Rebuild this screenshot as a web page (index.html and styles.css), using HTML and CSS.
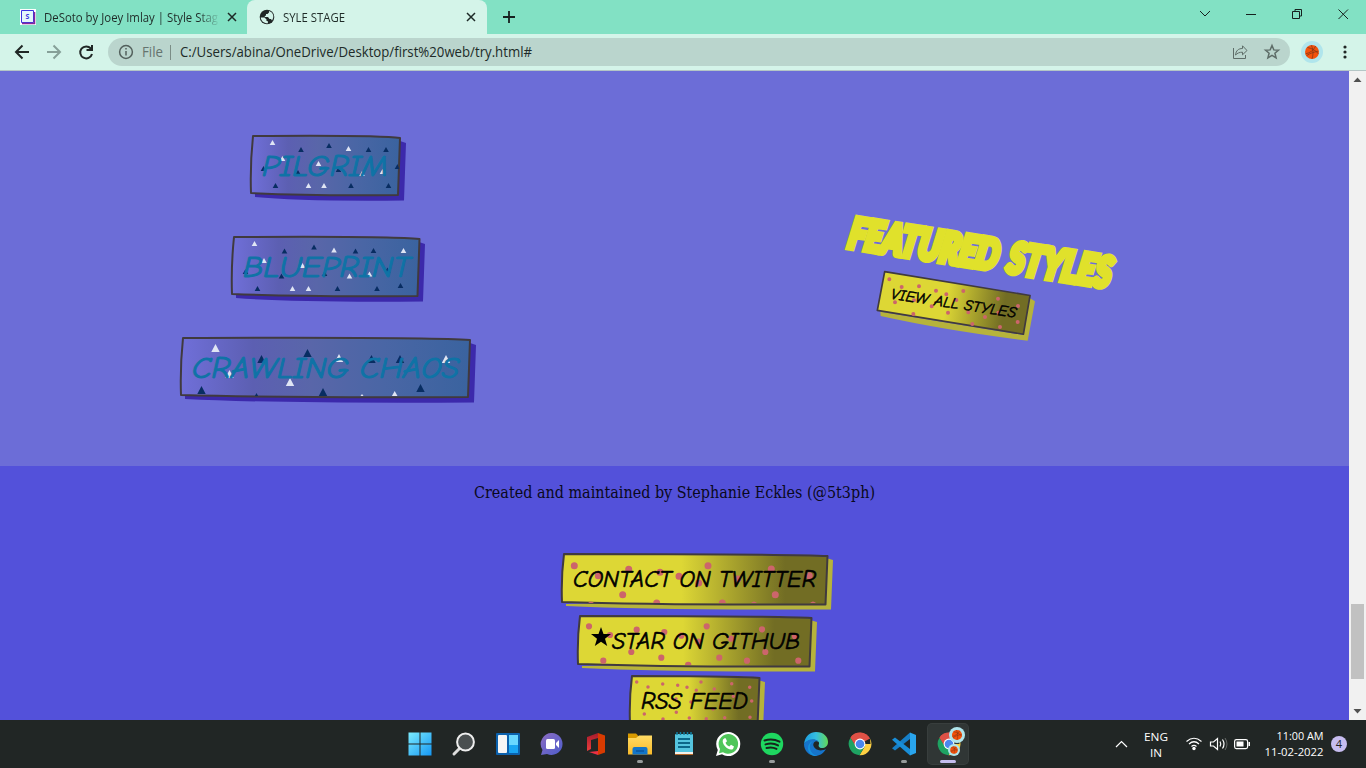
FILE: index.html
```html
<!DOCTYPE html>
<html lang="en">
<head>
<meta charset="utf-8">
<title>SYLE STAGE</title>
<link rel="stylesheet" href="styles.css">
</head>
<body>
<svg class="defs" width="0" height="0">
  <defs>
    <linearGradient id="gold"><stop offset="0" stop-color="#ddd735"/><stop offset=".45" stop-color="#ddd735"/><stop offset=".84" stop-color="#726d24"/><stop offset="1" stop-color="#726d24"/></linearGradient>
    <linearGradient id="blue"><stop offset="0" stop-color="#706fd9"/><stop offset=".25" stop-color="#5c5fb2"/><stop offset=".45" stop-color="#5966a9"/><stop offset=".7" stop-color="#4a66a5"/><stop offset="1" stop-color="#3a639f"/></linearGradient>
    <linearGradient id="bubble" x2="1" y2="1"><stop stop-color="#8d6cc2"/><stop offset="1" stop-color="#4c5dcc"/></linearGradient>
    <linearGradient id="win" x2="1" y2="1"><stop stop-color="#7cecff"/><stop offset="1" stop-color="#1597f4"/></linearGradient>
    <linearGradient id="edge" x2="1"><stop stop-color="#1b9de2"/><stop offset=".5" stop-color="#35bde0"/><stop offset="1" stop-color="#62d957"/></linearGradient>
    <linearGradient id="folder" x2="0" y2="1"><stop stop-color="#ffdb65"/><stop offset="1" stop-color="#f9bb2a"/></linearGradient>
    <linearGradient id="office" x2="0" y2="1"><stop stop-color="#a51b2c"/><stop offset="1" stop-color="#ed3d3d"/></linearGradient>
    <symbol id="ball" viewBox="0 0 24 24"><circle cx="12" cy="12" r="12" fill="#b0e5ec"/><circle cx="12" cy="12" r="7.600" fill="#f4510b"/><path d="M5 14c5-1 9-4 11-8.500M11 4.500c2 3 3 9 1 15M7 7c5 1 10 4 12 7M6 16c4-3 9-4 13-5" fill="none" stroke="#7b3518" stroke-width=".8"/></symbol>
    <symbol id="chrome" viewBox="0 0 24 24"><path d="M12 12 2.500 5.500A11.300 11.300 0 0 1 22 6.500Z" fill="#df5146"/><path d="M12 12H22.500L22 6.500A11.300 11.300 0 0 1 11.500 23.200L17 14Z" fill="#fdd043"/><path d="M2.500 5.800A11.300 11.300 0 0 0 11.500 23.200L17 14H8Z" fill="#1ea362"/><path d="M12 6.500H22Q18 .7 12 .7 5.600.7 2.500 5.700L7 13Z" fill="#df5146"/><circle cx="12" cy="12" r="5.400" fill="#fff"/><circle cx="12" cy="12" r="4.300" fill="#4b87ee"/></symbol>
  </defs>
</svg>

<header class="tabs">
  <div class="tab">
    <svg class="fav" width="16" height="16"><path fill="#fff" d="M0 0h16v16H0z"/><path d="M1.500 1.500h12v12h-12z" fill="#e4f7fb" stroke="#3c33e0"/><path d="M14.500 3v11.500H2" fill="none" stroke="#85299b" stroke-width="1.500"/><text x="5.500" y="10" class="fav-letter">S</text></svg>
    <svg class="tab-name" width="176" height="20"><text x="0" y="12.500" textLength="174" lengthAdjust="spacingAndGlyphs">DeSoto by Joey Imlay | Style Stag</text></svg>
    <svg class="close" width="10" height="10"><path d="m1 1 8 8m0-8-8 8"/></svg>
  </div>
  <div class="tab active">
    <svg class="fav" width="16" height="16" viewBox="0 0 16 16"><circle cx="8" cy="8" r="7.300" fill="#202625"/><path d="M1.800 8.500h3.700l2 2v1.500h1.200l.3 2.300C5 14.500 2 12 1.800 8.500ZM10 2.100V3.500L8.500 5H7v1.500L5.800 7v1H9l1.500 2H12l1 1.500C15.500 8 14.500 3.500 10 2.100Z" fill="#d4f4e9"/></svg>
    <svg class="tab-name" width="176" height="20"><text x="0" y="12.500" textLength="62" lengthAdjust="spacingAndGlyphs">SYLE STAGE</text></svg>
    <svg class="close" width="10" height="10"><path d="m1 1 8 8m0-8-8 8"/></svg>
  </div>
  <svg class="plus" width="14" height="14"><path d="M7 1v12M1 7h12"/></svg>
  <svg class="winctl" width="170" height="24"><path d="m20 7 5 5 5-5M66 10.500h10M112.500 7.500h7v7h-7zM115 7.500v-2h6.500v6.500h-2M158.500 5.500l9.500 9.500m0-9.500-9.500 9.500"/></svg>
</header>

<nav class="toolbar">
  <svg class="nav" width="108" height="36"><path d="M29 18H16m6.500-6.500L16 18l6.500 6.500"/><path class="faint" d="M47 18h13m-6.500-6.500L60 18l-6.500 6.500"/><path d="M90.800 14.500A6 6 0 1 0 92 20M92 11v5h-5.500"/></svg>
  <div class="omnibox">
    <svg class="info" width="16" height="16"><circle cx="8" cy="8" r="6.400"/><path d="M8 7v4.500M8 4v1.600"/></svg>
    <svg class="url" width="410" height="26"><text class="file" x="8" y="18" textLength="21" lengthAdjust="spacingAndGlyphs">File</text><path d="M36.500 6v15" stroke="#7b8d86"/><text x="46" y="18" textLength="352" lengthAdjust="spacingAndGlyphs">C:/Users/abina/OneDrive/Desktop/first%20web/try.html#</text></svg>
    <svg class="acts" width="50" height="20"><path d="M2.500 6v10.500h12V13M4.500 13c.5-4.500 3-6.500 7-6.500V3.800l4.500 4.700-4.500 4.300v-2.600c-3 0-5 .8-7 2.800Z"/><path stroke-width="1.500" d="m41 3.500 1.800 4.400 4.700.3-3.600 3 1.200 4.700-4.100-2.500-4.100 2.500 1.200-4.700-3.600-3 4.700-.3Z"/></svg>
  </div>
  <svg class="avatar" width="22" height="22"><use href="#ball"/></svg>
  <svg class="more" width="4" height="16"><path d="M2 3h0M2 8h0M2 13h0"/></svg>
</nav>

<div class="viewport">
  <main class="page">
    <section class="styles">
      <div class="cards">
        <svg class="btn blue" width="156" height="66">
          <path class="shade" d="M5 59 148 55 150 6 156 8 154 65.500Q50 66.500 5 62Z"/>
          <path class="face" d="M3 1Q130 0 150 3L148 60Q65 61 1 58Q0 30 3 1Z"/>
          <path class="white" d="M22.500 5l2.800 5h-5.600zM98.500 11l2.800 5h-5.600zM32.500 21l2.800 5h-5.600zM68.500 26l2.800 5h-5.600zM132.500 34l2.800 5h-5.600zM58.500 48l2.800 5h-5.600zM74 48l2.800 5h-5.600zM112 36l2.800 5h-5.600z"/>
          <path class="navy" d="M51 12l2.800 5h-5.600zM79 8l2.800 5h-5.600zM118.500 12l2.800 5h-5.600zM136 12l2.800 5h-5.600zM13.500 31l2.800 5h-5.600zM48 35l2.800 5h-5.600zM88.500 32l2.800 5h-5.600zM147.500 29l1.800 5h-4.600zM25.500 48l2.800 5h-5.600zM101 48l2.800 5h-5.600zM138.500 48l2.800 5h-5.600z"/>
          <text x="12" y="41" textLength="126" lengthAdjust="spacingAndGlyphs">PILGRIM</text>
        </svg>
        <svg class="btn blue" width="194" height="66">
          <path class="shade" d="M5 59 186 55 188 6 194 8 192 65.500Q60 66.500 5 62Z"/>
          <path class="face" d="M3 1Q160 0 188.500 3L186.500 60Q75 61 1 58Q0 30 3 1Z"/>
          <path class="white" d="M23.500 5l2.800 5h-5.600zM103 11.500l2.800 5h-5.600zM172.500 12l2.800 5h-5.600zM33 22l2.800 5h-5.600zM71.500 27l2.800 5h-5.600zM138.500 35.500l2.800 5h-5.600zM118.500 37.500l2.800 5h-5.600zM61.500 50l2.800 5h-5.600zM77.500 50l2.800 5h-5.600z"/>
          <path class="navy" d="M53.500 12.500l2.800 5h-5.600zM83 8.500l2.800 5h-5.600zM124.500 12.500l2.800 5h-5.600zM142.500 12l2.800 5h-5.600zM14.500 33l2.800 5h-5.600zM50.500 37.500l2.800 5h-5.600zM93.500 35l2.800 5h-5.600zM156.500 31.500l2.800 5h-5.600zM26.500 50l2.800 5h-5.600zM106.500 50l2.800 5h-5.600zM146 50l2.800 5h-5.600zM169.500 47l2.800 5h-5.600z"/>
          <text x="12" y="41" textLength="167" lengthAdjust="spacingAndGlyphs">BLUEPRINT</text>
        </svg>
        <svg class="btn blue" width="296" height="66">
          <path class="shade" d="M5 59 288 55 290 6 296 8 294 65.500Q90 66.500 5 62Z"/>
          <path class="face" d="M3 1Q250 0 290 3L288 60Q110 61 1 58Q0 30 3 1Z"/>
          <path class="white" d="M35.500 7l4.200 8h-8.400zM159 17l4.200 8h-8.400zM49.500 33l4.200 8h-8.400zM110 41l4.200 8h-8.400zM266 18l4.200 8h-8.400zM214.700 54l2.800 5h-5.600zM182 57l1.500 2h-3z"/>
          <path class="navy" d="M81.500 18l4.200 8h-8.400zM127.500 12l4.200 8h-8.400zM191.500 18l4.200 8h-8.400zM220 18l4.200 8h-8.400zM21.500 49l4.200 8h-8.400zM143 51l4.200 8h-8.400zM76.500 56l1.600 3h-3.200zM240.500 47l4.200 8h-8.400z"/>
          <text x="12" y="41" textLength="267" lengthAdjust="spacingAndGlyphs">CRAWLING CHAOS</text>
        </svg>
      </div>
      <svg class="featured" width="295" height="145" viewBox="0 0 885 435">
        <g class="headline" transform="translate(31 126) rotate(8.800) skewX(-3)">
          <text x="4" y="0" textLength="453" lengthAdjust="spacingAndGlyphs">FEATURED</text>
          <text x="487" y="0" textLength="313" lengthAdjust="spacingAndGlyphs">STYLES</text>
        </g>
        <path d="M136 320 565 390 585 280 600 289 578 407Q330 376 137 333Z" fill="#b6b33b"/>
        <g transform="translate(149 200) rotate(9.300)"><path d="M0 0 442 0 441 118 -3 118Z" fill="url(#gold)" stroke="#403a3e" stroke-width="5" stroke-linejoin="round"/></g>
        <path class="dots" stroke-width="12" d="M163 223h0M200 246h0M252 244h0M303 257h0M334 268h0M385 258h0M489 281h0M549 303h0M180 292h0M237 286h0M290 304h0M364 285h0M339 323h0M400 322h0M450 336h0M490 323h0M548 351h0M235 327h0M412 357h0M495 366h0"/>
        <text class="view" transform="translate(166 281) rotate(8.700)" x="0" y="0" textLength="380" lengthAdjust="spacingAndGlyphs">VIEW ALL STYLES</text>
      </svg>
    </section>
    <footer class="foot">
      <svg class="credit" width="404" height="24"><text x="1" y="17" textLength="401" lengthAdjust="spacingAndGlyphs">Created and maintained by Stephanie Eckles (@5t3ph)</text></svg>
      <div class="links">
        <svg class="btn gold" width="272" height="57">
          <path class="shade" d="M5 51 263 47 265 5 272 7 270 56.500Q90 57 5 53Z"/>
          <path class="face" d="M3 1Q230 1 266.500 3L264.500 51.500Q90 52 1 49Q0 24 3 1Z"/>
          <path class="dots" stroke-width="7" d="M13.300 12.700h0M67.700 16.300h0M37.300 22.700h0M99 19.300h0M118 23.300h0M137.700 30h0M147 12.700h0M176.700 26h0M210.300 16h0M248.300 22.700h0M61.700 41.700h0M214.300 41.700h0"/>
          <path class="spots" d="M92.200 50a3.500 3.500 0 1 1 7 0zM157.800 50a3.500 3.500 0 1 1 7 0zM27 50q3-3 6 0zM190 50q3-3 6 0zM249 50q3-3 6 0z"/>
          <text x="12" y="34" textLength="243" lengthAdjust="spacingAndGlyphs">CONTACT ON TWITTER</text>
        </svg>
        <svg class="btn gold" width="240" height="57">
          <path class="shade" d="M5 51 232 47 233 5 240 7 238 56.500Q90 57 5 53Z"/>
          <path class="face" d="M3 1Q200 1 234.500 3L232.500 51.500Q90 52 1 49Q0 24 3 1Z"/>
          <path class="dots" stroke-width="6.200" d="M12 11.300h0M33 20h0M59.700 14.700h0M87.300 17h0M104.300 20.700h0M121.300 26.700h0M129.700 11.300h0M154 23.700h0M185 14.300h0M218 21.300h0M54.300 37h0M26.300 45.700h0M84.300 42.700h0M142.300 42.700h0M170 45.700h0M188.300 37h0M221.300 45.700h0"/>
          <path class="spots" d="M108 50a3.200 3.200 0 1 1 6.400 0z"/>
          <path d="m24 12 2.500 7 7.500.1-6 4.700 2.200 7.200-6.200-4.300-6.200 4.300 2.200-7.200-6-4.700 7.500-.1Z"/>
          <text x="35" y="34" textLength="188" lengthAdjust="spacingAndGlyphs">STAR ON GITHUB</text>
        </svg>
        <svg class="btn gold rss" width="136" height="57">
          <path class="shade" d="M5 51 128 47 129 5 136 7 134 56Q60 58 5 54Z"/>
          <path class="face" d="M3 1Q110 1 130.500 3L128.500 51Q60 52 1 49Q0 24 3 1Z"/>
          <path class="dots" stroke-width="3.500" d="M7.700 7h0M19 12h0M33.700 9h0M48.700 10.300h0M58 12.300h0M67.300 15.300h0M72 7h0M85.300 14h0M102.700 8.700h0M120.700 12.300h0M104.300 21.300h0M122.700 26h0M15.300 39h0M47.300 37.300h0M60.300 43h0M77.300 43.700h0M95.700 42.700h0M121 42.300h0M47 24h0M62 27h0M84 34h0M34 44h0"/>
          <text x="12" y="34" textLength="107" lengthAdjust="spacingAndGlyphs">RSS FEED</text>
        </svg>
      </div>
    </footer>
  </main>
  <aside class="scroll">
    <svg width="17" height="17"><path d="m4.500 11 4-4.500 4 4.500z" fill="#505050"/></svg>
    <div class="thumb"></div>
    <svg width="17" height="17"><path d="m4.500 6 4 4.500 4-4.500z" fill="#505050"/></svg>
  </aside>
</div>

<div class="taskbar">
  <div class="apps">
    <div class="app"><svg width="24" height="24"><path fill="url(#win)" d="M.5.500h11v11H.5zM12.500.500h11v11h-11zM.5 12.500h11v11H.5zM12.500 12.500h11v11h-11z"/></svg></div>
    <div class="app"><svg width="24" height="24"><path d="M8 16 2 22" stroke="#ddd" stroke-width="3" stroke-linecap="round"/><circle cx="13.500" cy="10" r="8.400" fill="#4a4f50" stroke="#eee" stroke-width="2"/></svg></div>
    <div class="app"><svg width="24" height="24"><rect y="1" width="24" height="22" rx="1" fill="#0b61ad"/><rect x="2" y="3" width="9" height="18" rx="1" fill="#f5f5f5"/><path fill="#69d7ff" d="M13 3h9v10h-9z"/><path fill="#19a5f2" d="M13 13h9v8h-9z"/></svg></div>
    <div class="app"><svg width="24" height="24"><path fill="url(#bubble)" d="M12 1a11 11 0 1 1-5 21L1 23l1.500-5A11 11 0 0 1 12 1Z"/><rect x="6" y="7" width="9" height="10" rx="1.500" fill="#fff"/><path d="m16 11 3-3v8l-3-3Z" fill="#fff"/></svg></div>
    <div class="app"><svg width="24" height="24"><path fill="url(#office)" d="M14 1 3 5v14l4-2V8l7-2z"/><path fill="#d83b01" d="M14 1l7 2.500v17L14 23z"/><path fill="#ed3044" d="M5 20l9-1v4z"/></svg></div>
    <div class="app run"><svg width="24" height="24"><path d="M0 1.500h8l2 2v5H0Z" fill="#d99a00"/><path d="M0 6h8l3-2.500h13v19H0Z" fill="url(#folder)"/><path d="M4.500 22.500V17q0-2 2-2h11q2 0 2 2v5.500Z" fill="#1275c8"/><path d="M8 19h8" stroke="#0b559d" stroke-width="1.500"/></svg></div>
    <div class="app"><svg width="24" height="24"><rect x="3" y="2" width="18" height="20" rx="1" fill="#55c5df"/><path d="M5 0v3m3.500-3v3M12 0v3M15.500 0v3M19 0v3" stroke="#117da0" stroke-width="1.500"/><path d="M6 7h12M6 11h12M6 15h12" stroke="#0c6789" stroke-width="2"/><path d="M3 20h18v3H3z" fill="#f4f0e8"/><path d="M3 22.500h18" stroke="#b46627"/></svg></div>
    <div class="app"><svg width="24" height="24"><path d="M12 0a12 12 0 1 1-6 22.200L0 24l1.800-6A12 12 0 0 1 12 0Z" fill="#fff"/><path d="M12 2a9.900 9.900 0 1 1-5 18.300L3 21.300 4 17A9.900 9.900 0 0 1 12 2Z" fill="#4fc65a"/><path d="M8.500 6.200 7 7.500c-2 5 6 12 10 9.500l1-2.500-3-1.700-1.700 1.700c-2-.8-3-2-3.800-3.700L11 9.200 9.700 6.200Z" fill="#fff"/></svg></div>
    <div class="app run"><svg width="24" height="24"><circle cx="12" cy="12" r="11.200" fill="#1ed760"/><path d="M4.500 8.500q8-2.500 15 1.200M5.500 12.400q7-2 12.500 1M6.500 16q5.500-1.500 10 .9" fill="none" stroke="#17251d" stroke-width="2" stroke-linecap="round"/></svg></div>
    <div class="app"><svg width="24" height="24"><path d="M0 12C1 4 6 0 12 0c8 0 12 5 12 10 0 4-3 6-6 6s-4-2-3-4c1-4-8-7-15 0Z" fill="url(#edge)"/><path d="M0 12C3 6 13 6 14.500 10c-3-2-6 1-5 4 1.500 4 7 6 12.500 3-3 5-7 7-11 7C4 23.500 0 18 0 12Z" fill="#1674cb"/><path d="M9 9c-6 4-3 13 4 15-5 .4-9-3-9-8 0-3 2-6 5-7Z" fill="#1590dc"/></svg></div>
    <div class="app"><svg width="24" height="24"><use href="#chrome"/></svg></div>
    <div class="app run"><svg width="24" height="24"><path d="M18 .5 24 3v18l-6 2.500Z" fill="#29a5ed"/><path d="M18 .5V7L3 18.500 0 16.200Z" fill="#167fc8"/><path d="M18 23.500V17L3 5.500 0 7.800Z" fill="#198ed8"/></svg></div>
    <div class="app current"><svg width="40" height="40"><use href="#chrome" x="9" y="8" width="24" height="24"/><use href="#ball" x="21" y="3" width="16" height="16"/><use href="#ball" x="20" y="20" width="12" height="12"/></svg></div>
  </div>
  <svg class="tray" width="250" height="48">
    <path class="line" d="m5 27 5.500-5.500L16 27"/>
    <text x="33" y="21" textLength="24" lengthAdjust="spacingAndGlyphs">ENG</text>
    <text x="39" y="37" textLength="12" lengthAdjust="spacingAndGlyphs">IN</text>
    <path class="line" d="M75.500 21.500q7.500-6.500 15 0M78 24q5-4.500 10 0M80.500 26.500q2.500-2.300 5 0"/><circle cx="83" cy="28.500" r="1.700" fill="#fff"/>
    <path class="line" d="M99.500 22h3l4-3.500v11l-4-3.500h-3zM109 21.500q1.500 2.500 0 5M111.500 19.500q3 4.500 0 9"/><path d="M114 18q4 6 0 12" fill="none" stroke="#676a68"/>
    <rect x="123.600" y="19.600" width="13" height="9" rx="1.800" class="line"/><path d="M125.500 21.500h7v5h-7zM137.500 22h1.500v4h-1.500z" fill="#fff"/>
    <text x="165.500" y="20" textLength="47" lengthAdjust="spacingAndGlyphs">11:00 AM</text>
    <text x="153.500" y="36" textLength="59" lengthAdjust="spacingAndGlyphs">11-02-2022</text>
    <circle cx="228" cy="24" r="8" fill="#c7bdf0"/><text x="224.800" y="28" class="count">4</text>
  </svg>
</div>
</body>
</html>
```

FILE: styles.css
```css
* { box-sizing: border-box; }
body { margin: 0; width: 1366px; height: 768px; overflow: hidden; display: flex; flex-direction: column; font-family: "Open Sans", "Noto Sans", sans-serif; background: #6c6dd7; }
svg { display: block; flex: none; overflow: visible; }
.defs { position: absolute; }

.tabs { height: 34px; flex: none; display: flex; background: #82e1c4; }
.tab { width: 247px; height: 34px; padding: 9px 10px 0 20px; display: flex; }
.tab.active { width: 240px; padding: 9px 10px 0 12px; background: #d4f4e9; border-radius: 8px 8px 0 0; }
.tab-name { margin-left: 8px; font-size: 12px; fill: #1f2b28; -webkit-mask-image: linear-gradient(90deg, #000 88%, transparent); mask-image: linear-gradient(90deg, #000 88%, transparent); }
.fav-letter { font: bold 7px "Open Sans", sans-serif; fill: #3c33e0; }
.close { margin: 3px 0 0 auto; fill: none; stroke: #1d2926; stroke-width: 1.5; }
.tab:not(.active) .close { margin-left: 7px; }
.tab.active .close { margin-right: 1px; }
.plus { margin: 10px 0 0 15px; stroke: #17211f; stroke-width: 1.8; }
.winctl { margin: 4px 16px 0 auto; fill: none; stroke: #17211f; stroke-width: 1; }

.toolbar { height: 37px; flex: none; display: flex; align-items: center; background: #d4f4e9; border-bottom: 1px solid #b4c6c6; }
.nav { fill: none; stroke: #202725; stroke-width: 2; }
.nav .faint { stroke: #86a098; }
.omnibox { width: 1182px; height: 28px; border-radius: 14px; background: #bad5cd; display: flex; align-items: center; padding: 0 9px 0 10px; }
.info { fill: none; stroke: #53605c; stroke-width: 1.5; }
.url { font-size: 14px; fill: #202b28; }
.url .file { fill: #65736e; }
.acts { margin-left: auto; fill: none; stroke: #5e6d68; }
.avatar { margin-left: 11px; }
.more { margin-left: 20px; fill: none; stroke: #202725; stroke-width: 3.2; stroke-linecap: round; }

.viewport { height: 649px; flex: none; display: flex; overflow: hidden; }
.page { width: 1349px; overflow: hidden; }
.styles { height: 395px; background: #6c6dd7; display: flex; padding-left: 180px; }
.cards { width: 296px; padding-top: 64px; display: flex; flex-direction: column; align-items: center; gap: 35px; }
.featured { margin: 134px 0 0 359px; }
.foot { height: 300px; background: #5351da; padding-top: 15px; }
.credit { margin: 0 auto; font-family: "Roboto Slab", "DejaVu Serif Condensed", "DejaVu Serif", serif; font-size: 16.5px; fill: #0a0920; }
.links { margin: 48px 0 0 561px; width: 272px; display: flex; flex-direction: column; align-items: center; gap: 5px; }
.rss { margin-top: -2px; }

.btn text { font-family: "Comic Neue", Lato, sans-serif; font-style: italic; stroke-linejoin: round; stroke-linecap: round; }
.face { stroke: #403a3e; stroke-width: 2; stroke-linejoin: round; }
.blue .face { fill: url(#blue); }
.blue .shade { fill: #3c29ab; }
.blue text { font-size: 30px; fill: #0f73a6; stroke: #0f73a6; stroke-width: 1; }
.gold .face { fill: url(#gold); }
.gold .shade { fill: #b6b33b; }
.gold text { font-size: 23.5px; fill: #000; stroke: #000; stroke-width: .6; }
.white { fill: #dfe5f4; }
.navy { fill: #082d62; }
.dots { fill: none; stroke: #cc656b; stroke-linecap: round; }
.spots { fill: #cc656b; }
.headline { font: italic 900 126px Lato, sans-serif; fill: #e0e12b; stroke: #e0e12b; stroke-width: 19; stroke-linejoin: miter; stroke-miterlimit: 2; }
.view { font: italic 46px "Comic Neue", Lato, sans-serif; fill: #000; stroke: #000; stroke-width: 1.5; }

.scroll { width: 17px; background: #f1f1f1; display: flex; flex-direction: column; }
.thumb { width: 13px; height: 75px; margin: 516px 0 24px 2px; background: #c1c1c1; }

.taskbar { height: 48px; flex: none; background: #212625; display: flex; padding-left: 397.5px; }
.apps { width: 573px; display: flex; }
.app { width: 44.05px; flex: none; height: 48px; position: relative; display: flex; align-items: center; justify-content: center; }
.app.run::after, .app.current::after { content: ""; position: absolute; bottom: 5px; width: 6px; height: 3px; border-radius: 2px; background: #979c9c; }
.app.current::after { width: 16px; background: #c4bdee; }
.app.current svg { background: #303635; border-radius: 4px; box-shadow: 0 0 0 1px #383e3d; }
.tray { margin-left: 140px; font-size: 11.5px; fill: #fff; }
.line { fill: none; stroke: #fff; stroke-width: 1.2; }
.tray .count { font-size: 11px; fill: #222; }
```
